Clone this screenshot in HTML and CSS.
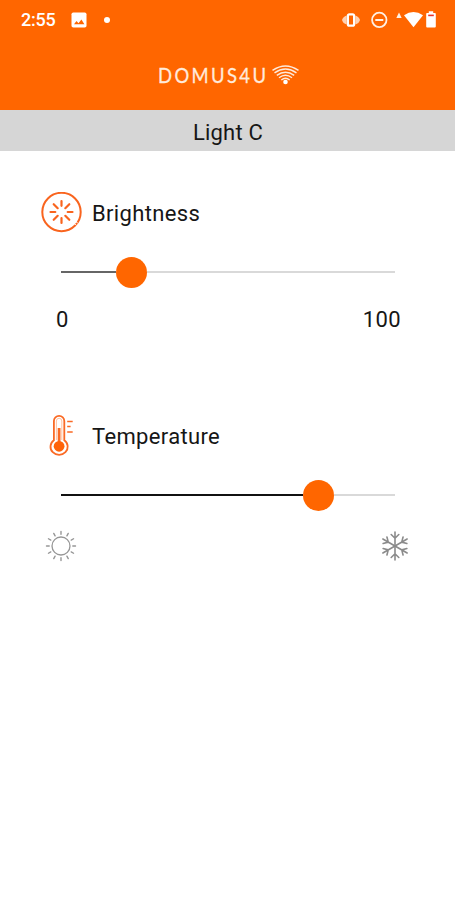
FILE: index.html
```html
<!DOCTYPE html>
<html lang="en">
<head>
<meta charset="utf-8">
<title>Light C</title>
<link rel="stylesheet" href="styles.css">
</head>
<body>
<header class="header">
  <div class="status">
    <span class="clock">2:55</span>
    <svg class="photo" width="16" height="16" viewBox="0 0 16 16"><rect x=".5" y=".5" width="15" height="15" rx="1.8" fill="#fff"/><path d="M3 12.300 5.500 9l2 2.200 2.900-3.600 3 4.700z" fill="#ff6600"/></svg>
    <span class="dot"></span>
    <svg class="system" width="96" height="20" viewBox="0 0 96 20">
      <path d="M5.700 5.500Q2 6.500 1 10q1 3.500 4.700 4.500zM14.300 5.500Q18 6.500 19 10q-1 3.500-4.700 4.500z" fill="#ffd2b3"/>
      <rect x="6.900" y="4.300" width="6.200" height="11.400" rx="1.500" fill="#ff6600" stroke="#fff" stroke-width="2.200"/>
      <circle cx="38.300" cy="9.900" r="7.200" fill="none" stroke="#fff0e4" stroke-width="1.800"/>
      <path d="M34.300 10h8" stroke="#fff0e4" stroke-width="2"/>
      <path d="m58 2.500 2.700 5.500h-5.400z" fill="#fff0e4"/>
      <path d="M63 5.300Q72.500-1.300 82 5.300l-9.500 12z" fill="#fff"/>
      <path d="M86 3h1.800V1.300h4.400V3H94q.8 0 .8.900v12.700q0 1-.9 1h-7.800q-.9 0-.9-1V3.900q0-.9.800-.9z" fill="#fff"/><path d="M87.200 5.400h5.600" stroke="#e9342a" stroke-width="1.600"/>
    </svg>
  </div>
  <div class="brand">
    <svg width="142" height="24" viewBox="0 0 142 24">
      <text class="brand-name" x="0" y="20" textLength="120" lengthAdjust="spacing" transform="scale(.9 1)">DOMUS4U</text>
      <g fill="none" stroke="#ffeadb" stroke-width="1.400"><path d="M114.500 7.400q13-8.800 26 0M116.500 9.900q11-7.700 22 0M118.800 12.400q8.700-6.400 17.400 0M121 14.800q6.500-5 13 0M123.300 17q4.200-3.400 8.400 0"/></g>
      <circle cx="127.500" cy="19" r="2.300" fill="#fff"/>
    </svg>
  </div>
</header>
<h1 class="title">Light C</h1>
<main class="controls">
  <section class="control">
    <h2 class="control-head">
      <svg width="41" height="41" viewBox="0 0 41 41" fill="none" stroke="#f9641e" stroke-linecap="round">
        <circle cx="20.500" cy="20" r="19.200" stroke-width="2"/>
        <path d="M20.500 9v4.800M20.500 26.200V31M9.500 20h4.800M26.700 20h4.800M12.700 12.200l4 4M24.300 23.800l4 4M28.300 12.200l-4 4M16.700 23.800l-4 4" stroke-width="2.200"/>
        <path d="m35 29.800 1.500 1M33.600 31.800l1.400 1" stroke="#fff" stroke-width=".9"/>
      </svg>
      <span>Brightness</span>
    </h2>
    <div class="slider brightness"><i class="done"></i><i class="thumb"></i><i class="rest"></i></div>
    <div class="range"><span>0</span><span>100</span></div>
  </section>
  <section class="control">
    <h2 class="control-head">
      <svg width="41" height="41" viewBox="0 0 41 41" fill="none" stroke="#fa6a25">
        <path d="M12.900 25.300V5.900a5.200 5 0 0 1 10.400 0v19.400a8.600 8.100 0 1 1-10.400 0z" stroke-width="1.800"/>
        <path d="M15.400 25V6a2.700 2.700 0 0 1 5.400 0v19" stroke="#ffb48a" stroke-width=".8"/>
        <path d="M18.100 13v18" stroke-width="2.800"/>
        <circle cx="18.100" cy="31.300" r="5.400" fill="#ff6208" stroke="none"/>
        <path d="M26.200 6.500h5.500M26.200 11.500h3.400M26.200 17h5.500" stroke-width="1.600"/>
      </svg>
      <span>Temperature</span>
    </h2>
    <div class="slider temperature"><i class="done"></i><i class="thumb"></i><i class="rest"></i></div>
    <div class="symbols">
      <svg width="32" height="32" viewBox="-16 -16 32 32" fill="none" stroke="#969696" stroke-linecap="round">
        <circle r="9" stroke-width="1.300"/>
        <path d="M0-11.800v-2.700M0 11.800v2.700M-11.800 0h-2.700M11.800 0h2.700M5.900-10.220l1.350-2.330M10.220-5.900l2.330-1.350M10.220 5.900l2.330 1.350M5.900 10.220l1.350 2.330M-5.900 10.220l-1.350 2.330M-10.220 5.900l-2.330 1.350M-10.220-5.900l-2.330-1.350M-5.900-10.220l-1.350-2.330" stroke-width="1.400"/>
      </svg>
      <svg width="32" height="32" viewBox="-16 -16 32 32" fill="none" stroke="#8b8b8b" stroke-width="1.600" stroke-linecap="round">
        <defs><path id="arm" d="M0 0v-14M-3.800-11.500 0-7.800 3.800-11.500"/></defs>
        <use href="#arm"/><use href="#arm" transform="rotate(60)"/><use href="#arm" transform="rotate(120)"/><use href="#arm" transform="rotate(180)"/><use href="#arm" transform="rotate(240)"/><use href="#arm" transform="rotate(300)"/>
      </svg>
    </div>
  </section>
</main>
</body>
</html>
```
FILE: styles.css
```css
* { box-sizing: border-box; }
body {
  margin: 0;
  min-height: 900px;
  background: #fff;
  color: #161616;
  font-family: Roboto, sans-serif;
}
.header { height: 110px; background: #ff6600; }
.status {
  display: flex;
  align-items: center;
  height: 39px;
  padding: 0 14px 0 21px;
  color: #fff;
}
.clock { width: 50px; font-size: 18px; font-weight: 500; line-height: 20px; letter-spacing: -.2px; }
.dot { width: 6px; height: 6px; margin-left: 17px; border-radius: 50%; background: #fff; }
.system { margin-left: auto; margin-right: 4px; }
.brand { display: flex; justify-content: center; padding: 24px 0 0 3px; }
.brand-name { font: 400 20.500px Lato, sans-serif; fill: #ffeadb; stroke: #ffeadb; stroke-width: .3px; }
.title {
  margin: 0;
  height: 41px;
  background: #d6d6d6;
  text-align: center;
  font-size: 22px;
  font-weight: 400;
  line-height: 45px;
  letter-spacing: .2px;
  padding-left: 1px;
}
.controls { padding: 41px 41px 0; }
.control + .control { margin-top: 80px; }
.control-head {
  display: flex;
  align-items: center;
  gap: 10px;
  height: 41px;
  margin: 0;
  font-size: 22px;
  font-weight: 400;
  letter-spacing: .35px;
}
.control-head span { padding-top: 1px; }
.slider { display: flex; align-items: center; height: 32px; margin: 23px 19px 0 20px; }
.done { height: 2px; }
.brightness .done { width: 55px; background: #666; }
.temperature .done { width: 242px; background: #111; }
.thumb { flex: none; width: 31px; height: 31px; border-radius: 50%; background: #ff6600; }
.rest { flex: 1; height: 2px; background: #d9d9d9; }
.range {
  display: flex;
  justify-content: space-between;
  height: 30px;
  margin: 17px 13px 0 15px;
  font-size: 22px;
  line-height: 30px;
  letter-spacing: .4px;
}
.symbols { display: flex; justify-content: space-between; margin: 19px 3px 0 4px; }
```
